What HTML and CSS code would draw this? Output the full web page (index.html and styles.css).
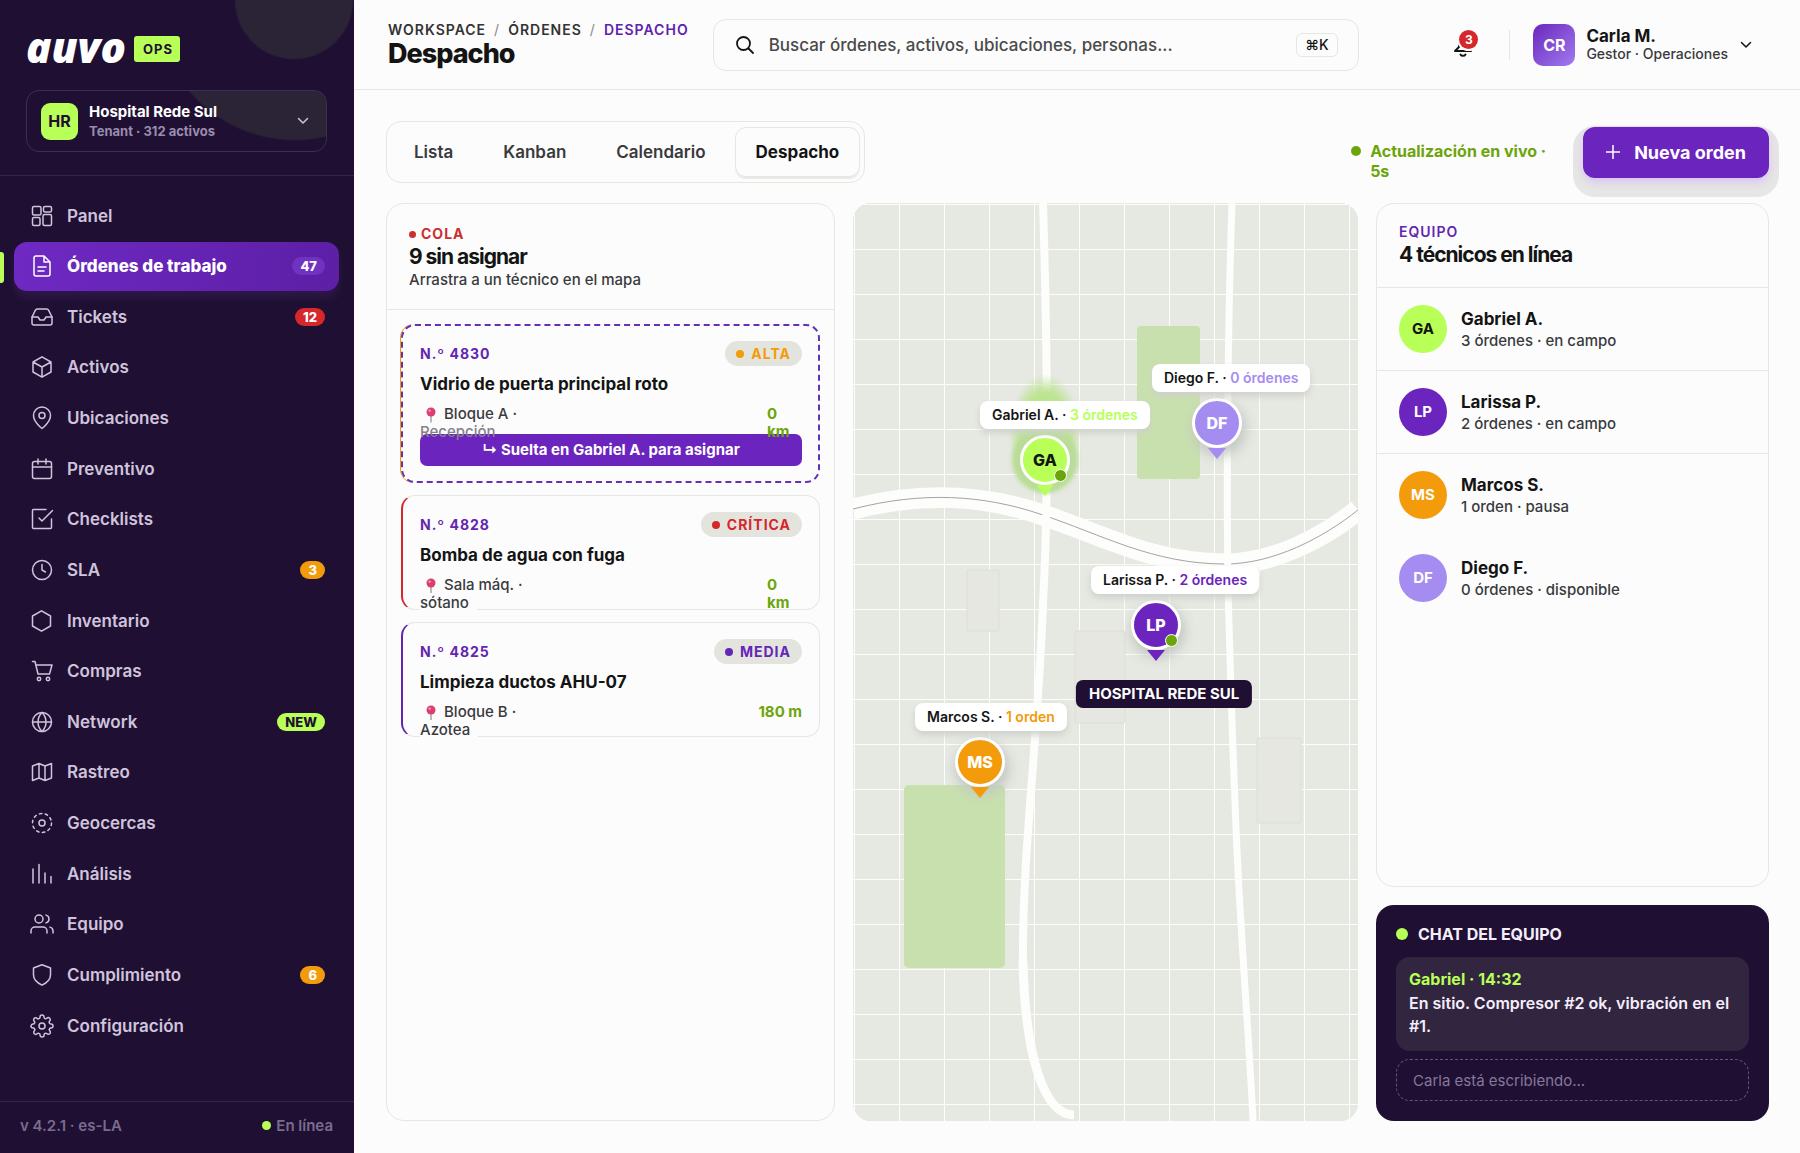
FILE: index.html
```html
<!DOCTYPE html>
<html lang="es">
<head>
<meta charset="utf-8">
<meta name="viewport" content="width=device-width, initial-scale=1">
<title>Despacho · Auvo Ops</title>
<link rel="stylesheet" href="styles.css">
</head>
<body>
<div class="app">
  <aside class="sidebar">
    <div class="sidebar-top">
      <div class="brand"><span class="brand-name">auvo</span><span class="brand-tag">OPS</span></div>
      <button class="tenant" type="button">
        <span class="tenant-logo">HR</span>
        <span class="tenant-text"><strong>Hospital Rede Sul</strong><small>Tenant · 312 activos</small></span>
        <svg class="chevron" viewBox="0 0 14 14"><path d="M2.500 4.500 7 9l4.500-4.500"/></svg>
      </button>
    </div>
    <nav class="nav">
      <a class="nav-item" href="#"><svg class="icon" viewBox="0 0 24 24"><rect x="2.500" y="2.500" width="8.500" height="8.500" rx="1.500"/><rect x="13.500" y="2.500" width="8" height="5.500" rx="1.500"/><rect x="2.500" y="13.500" width="7.500" height="8" rx="1.500"/><rect x="13" y="10.500" width="8.500" height="11" rx="1.500"/></svg><span>Panel</span></a>
      <a class="nav-item is-active" href="#"><svg class="icon" viewBox="0 0 24 24"><path d="M14 2H6a2 2 0 0 0-2 2v16a2 2 0 0 0 2 2h12a2 2 0 0 0 2-2V8zM14 2v6h6M8 13h8M8 17h6"/></svg><span>Órdenes de trabajo</span><b class="count count-soft">47</b></a>
      <a class="nav-item" href="#"><svg class="icon" viewBox="0 0 24 24"><path d="M22 12h-6l-2 3h-4l-2-3H2"/><path d="M5.450 5.110 2 12v6a2 2 0 0 0 2 2h16a2 2 0 0 0 2-2v-6l-3.450-6.890A2 2 0 0 0 16.760 4H7.240a2 2 0 0 0-1.790 1.110z"/></svg><span>Tickets</span><b class="count count-red">12</b></a>
      <a class="nav-item" href="#"><svg class="icon" viewBox="0 0 24 24"><path d="M12 1.800 21 7v10l-9 5.200L3 17V7zM3 7l9 5 9-5M12 12v10"/></svg><span>Activos</span></a>
      <a class="nav-item" href="#"><svg class="icon" viewBox="0 0 24 24"><path d="M12 22.500S20.500 16 20.500 9.500a8.500 8.500 0 0 0-17 0C3.500 16 12 22.500 12 22.500z"/><circle cx="12" cy="9.500" r="3"/></svg><span>Ubicaciones</span></a>
      <a class="nav-item" href="#"><svg class="icon" viewBox="0 0 24 24"><rect x="2.500" y="4.500" width="19" height="17" rx="2"/><path d="M2.500 10h19M8 2v5M16 2v5"/></svg><span>Preventivo</span></a>
      <a class="nav-item" href="#"><svg class="icon" viewBox="0 0 24 24"><path d="M16 2.500H3.500a1 1 0 0 0-1 1v17a1 1 0 0 0 1 1h17a1 1 0 0 0 1-1V12M9 11l3 3L22.500 3.500"/></svg><span>Checklists</span></a>
      <a class="nav-item" href="#"><svg class="icon" viewBox="0 0 24 24"><circle cx="12" cy="12" r="9.500"/><path d="M12 6.500V12l3.500 2"/></svg><span>SLA</span><b class="count count-amber">3</b></a>
      <a class="nav-item" href="#"><svg class="icon" viewBox="0 0 24 24"><path d="M11.500 1.800 20.500 7v10l-9 5.200L2.500 17V7z"/></svg><span>Inventario</span></a>
      <a class="nav-item" href="#"><svg class="icon" viewBox="0 0 24 24"><circle cx="9" cy="20" r="1.700"/><circle cx="18" cy="20" r="1.700"/><path d="M2.500 2.500H5L8 15h11.500L22 6H6"/></svg><span>Compras</span></a>
      <a class="nav-item" href="#"><svg class="icon" viewBox="0 0 24 24"><circle cx="12" cy="12" r="9.500"/><path d="M2.500 12h19M12 2.500c3 3 4 6 4 9.500s-1 6.500-4 9.500c-3-3-4-6-4-9.500s1-6.500 4-9.500z"/></svg><span>Network</span><b class="count count-lime">NEW</b></a>
      <a class="nav-item" href="#"><svg class="icon" viewBox="0 0 24 24"><path d="M2.500 6 9 3.500l6 2.500 6.500-2.500V18L15 20.500 9 18l-6.500 2.500zM9 3.500V18M15 6v14.500"/></svg><span>Rastreo</span></a>
      <a class="nav-item" href="#"><svg class="icon" viewBox="0 0 24 24"><circle cx="12" cy="12" r="9.500" stroke-dasharray="2.500 3.470"/><circle cx="12" cy="12" r="3"/></svg><span>Geocercas</span></a>
      <a class="nav-item" href="#"><svg class="icon" viewBox="0 0 24 24"><path d="M3 7v14M9 2.500V21M15 11v10M21 14.500V21"/></svg><span>Análisis</span></a>
      <a class="nav-item" href="#"><svg class="icon" viewBox="0 0 24 24"><path d="M17 21v-2a4 4 0 0 0-4-4H5a4 4 0 0 0-4 4v2M23 21v-2a4 4 0 0 0-3-3.870M16 3.130a4 4 0 0 1 0 7.750"/><circle cx="9" cy="7" r="4"/></svg><span>Equipo</span></a>
      <a class="nav-item" href="#"><svg class="icon" viewBox="0 0 24 24"><path d="M12 1.800 20.500 5v7c0 5-4 8-8.500 10.200C7.500 20 3.500 17 3.500 12V5z"/></svg><span>Cumplimiento</span><b class="count count-amber">6</b></a>
      <a class="nav-item" href="#"><svg class="icon" viewBox="0 0 24 24"><circle cx="12" cy="12" r="3"/><path d="M19.4 15a1.65 1.65 0 0 0 .33 1.82l.06.06a2 2 0 0 1 0 2.83 2 2 0 0 1-2.83 0l-.06-.06a1.65 1.65 0 0 0-1.82-.33 1.65 1.65 0 0 0-1 1.51V21a2 2 0 0 1-2 2 2 2 0 0 1-2-2v-.09A1.65 1.65 0 0 0 9 19.4a1.65 1.65 0 0 0-1.82.33l-.06.06a2 2 0 0 1-2.83 0 2 2 0 0 1 0-2.83l.06-.06a1.65 1.65 0 0 0 .33-1.82 1.65 1.65 0 0 0-1.51-1H3a2 2 0 0 1-2-2 2 2 0 0 1 2-2h.09A1.65 1.65 0 0 0 4.6 9a1.65 1.65 0 0 0-.33-1.82l-.06-.06a2 2 0 0 1 0-2.83 2 2 0 0 1 2.83 0l.06.06a1.65 1.65 0 0 0 1.82.33H9a1.65 1.65 0 0 0 1-1.51V3a2 2 0 0 1 2-2 2 2 0 0 1 2 2v.09a1.65 1.65 0 0 0 1 1.51 1.65 1.65 0 0 0 1.82-.33l.06-.06a2 2 0 0 1 2.83 0 2 2 0 0 1 0 2.83l-.06.06a1.65 1.65 0 0 0-.33 1.82V9a1.65 1.65 0 0 0 1.51 1H21a2 2 0 0 1 2 2 2 2 0 0 1-2 2h-.09a1.65 1.65 0 0 0-1.51 1z"/></svg><span>Configuración</span></a>
    </nav>
    <footer class="sidebar-foot"><span>v 4.2.1 · es-LA</span><span class="online"><i></i>En línea</span></footer>
  </aside>

  <div class="main">
    <header class="topbar">
      <div class="heading">
        <nav class="crumbs"><a href="#">WORKSPACE</a><i>/</i><a href="#">ÓRDENES</a><i>/</i><a class="current" href="#">DESPACHO</a></nav>
        <h1>Despacho</h1>
      </div>
      <label class="search">
        <svg viewBox="0 0 20 20"><circle cx="8.500" cy="8.500" r="6.500"/><path d="m13.500 13.500 4.500 4.500"/></svg>
        <input type="search" aria-label="Buscar" placeholder="Buscar órdenes, activos, ubicaciones, personas...">
        <kbd>⌘K</kbd>
      </label>
      <div class="account">
        <button class="bell" type="button" aria-label="Notificaciones">
          <svg viewBox="0 0 24 24"><path d="M8 12v2L4 18h16l-3-4v-2M9.500 21.500c1 1.800 4 1.800 5 0"/></svg>
          <b>3</b>
        </button>
        <button class="user" type="button">
          <span class="user-pic">CR</span>
          <span class="user-text"><strong>Carla M.</strong><small>Gestor · Operaciones</small></span>
          <svg class="chevron" viewBox="0 0 14 14"><path d="M2.500 4.500 7 9l4.500-4.500"/></svg>
        </button>
      </div>
    </header>

    <main class="content">
      <div class="toolbar">
        <div class="tabs" role="tablist">
          <button type="button" role="tab">Lista</button>
          <button type="button" role="tab">Kanban</button>
          <button type="button" role="tab">Calendario</button>
          <button type="button" role="tab" class="is-active" aria-selected="true">Despacho</button>
        </div>
        <div class="actions">
          <p class="live"><i></i><span>Actualización en vivo · 5s</span></p>
          <button class="primary" type="button"><svg viewBox="0 0 14 14"><path d="M7 0v14M0 7h14"/></svg>Nueva orden</button>
        </div>
      </div>

      <div class="board">
        <section class="panel queue">
          <header class="panel-head">
            <p class="eyebrow red"><i></i>COLA</p>
            <h2>9 sin asignar</h2>
            <p class="hint">Arrastra a un técnico en el mapa</p>
          </header>
          <div class="orders">
            <article class="order order-high is-dragging">
              <div class="order-top"><span class="num">N.º 4830</span><span class="pill amber"><i></i>ALTA</span></div>
              <h3>Vidrio de puerta principal roto</h3>
              <div class="meta"><p class="place"><svg viewBox="0 0 10 16"><path class="needle" d="M5 8v7"/><circle cx="5" cy="5" r="4.500"/><circle class="shine" cx="3.700" cy="3.600" r="1.200"/></svg>Bloque A ·<br><span class="faded">Recepción</span></p><p class="dist">0 km</p></div>
              <div class="drop">↳ Suelta en Gabriel A. para asignar</div>
            </article>
            <article class="order order-critical">
              <div class="order-top"><span class="num">N.º 4828</span><span class="pill red"><i></i>CRÍTICA</span></div>
              <h3>Bomba de agua con fuga</h3>
              <div class="meta"><p class="place"><svg viewBox="0 0 10 16"><path class="needle" d="M5 8v7"/><circle cx="5" cy="5" r="4.500"/><circle class="shine" cx="3.700" cy="3.600" r="1.200"/></svg>Sala máq. ·<br><span>sótano</span></p><p class="dist">0 km</p></div>
            </article>
            <article class="order order-medium">
              <div class="order-top"><span class="num">N.º 4825</span><span class="pill purple"><i></i>MEDIA</span></div>
              <h3>Limpieza ductos AHU-07</h3>
              <div class="meta"><p class="place"><svg viewBox="0 0 10 16"><path class="needle" d="M5 8v7"/><circle cx="5" cy="5" r="4.500"/><circle class="shine" cx="3.700" cy="3.600" r="1.200"/></svg>Bloque B ·<br><span>Azotea</span></p><p class="dist wide">180 m</p></div>
            </article>
          </div>
        </section>

        <section class="map" aria-label="Mapa">
          <svg class="map-art" viewBox="0 0 505 918" preserveAspectRatio="none">
            <defs><pattern id="grid" x="1" y="1" width="45" height="45" patternUnits="userSpaceOnUse"><path d="M0 .5h45M.5 0v45" stroke="#fdfefc" fill="none"/></pattern></defs>
            <rect width="505" height="918" fill="#e6e8e2"/>
            <rect width="505" height="918" fill="url(#grid)"/>
            <g fill="#e5e7e0" stroke="#dcded7"><rect x="114" y="367" width="32" height="61" rx="2"/><rect x="222" y="428" width="50" height="92" rx="2"/><rect x="404" y="535" width="44" height="85" rx="2"/></g>
            <g fill="#c8e0ad"><rect x="284" y="123" width="63" height="153" rx="4"/><rect x="51" y="582" width="101" height="183" rx="5"/></g>
            <g fill="none" stroke="#fdfdfc">
              <path stroke-width="21" d="M0 306C70 288 130 292 187 311 250 332 300 361 372 361 420 361 470 335 505 307"/>
              <path stroke="#a3a4a0" d="M0 306C70 288 130 292 187 311 250 332 300 361 372 361 420 361 470 335 505 307"/>
              <path stroke-width="8" d="M190 0C196 200 194 330 190 400 185 540 169 650 170 760"/>
              <path stroke-width="9" d="M170 758C172 850 190 912 221 912"/>
              <path stroke-width="7" d="M379 0C374 150 373 330 376 420 380 560 384 660 388 720 392 790 398 870 400 918"/>
            </g>
          </svg>
          <div class="tech lime glow" style="left:38.020%;top:28%"><span class="pin">GA<i></i></span><span class="tip"><b>Gabriel A.</b> · <em>3 órdenes</em></span></div>
          <div class="tech lilac" style="left:72.080%;top:23.970%"><span class="pin">DF</span><span class="tip"><b>Diego F.</b> · <em>0 órdenes</em></span></div>
          <div class="tech purple" style="left:60%;top:45.970%"><span class="pin">LP<i></i></span><span class="tip"><b>Larissa P.</b> · <em>2 órdenes</em></span></div>
          <div class="tech amber" style="left:25.150%;top:60.890%"><span class="pin">MS</span><span class="tip"><b>Marcos S.</b> · <em>1 orden</em></span></div>
          <div class="site" style="left:61.600%;top:53.500%">HOSPITAL REDE SUL</div>
        </section>

        <div class="side">
          <section class="panel team">
            <header class="panel-head">
              <p class="eyebrow purple">EQUIPO</p>
              <h2>4 técnicos en línea</h2>
            </header>
            <ul>
              <li><span class="avatar lime">GA</span><div><strong>Gabriel A.</strong><small>3 órdenes · en campo</small></div></li>
              <li><span class="avatar purple">LP</span><div><strong>Larissa P.</strong><small>2 órdenes · en campo</small></div></li>
              <li><span class="avatar amber">MS</span><div><strong>Marcos S.</strong><small>1 orden · pausa</small></div></li>
              <li><span class="avatar lilac">DF</span><div><strong>Diego F.</strong><small>0 órdenes · disponible</small></div></li>
            </ul>
          </section>
          <section class="chat">
            <h2><i></i>CHAT DEL EQUIPO</h2>
            <div class="message"><strong>Gabriel · 14:32</strong><p>En sitio. Compresor #2 ok, vibración en el #1.</p></div>
            <input type="text" aria-label="Mensaje" placeholder="Carla está escribiendo...">
          </section>
        </div>
      </div>
    </main>
  </div>
</div>
</body>
</html>
```

FILE: styles.css
```css
:root {
  --ink: #141414;
  --text: #3a3a3c;
  --line: #e6e6e3;
  --paper: #fcfcfc;
  --night: #1f1033;
  --purple: #6b24bd;
  --lime: #b8ff57;
  --amber: #f39b0b;
  --red: #d6272b;
  --lilac: #a58cf0;
  --leaf: #6ba50a;
}

* { box-sizing: border-box; }

body, h1, h2, h3, p, ul { margin: 0; padding: 0; }

body {
  background: var(--paper);
  color: var(--ink);
  font-family: Inter, "Liberation Sans", sans-serif;
  font-size: 16px;
}

button, input, kbd { font: inherit; color: inherit; }
button { border: 0; background: none; padding: 0; text-align: left; cursor: pointer; }
a { color: inherit; text-decoration: none; }
i, em { font-style: normal; }
svg { fill: none; stroke: currentColor; stroke-linecap: round; stroke-linejoin: round; flex: none; }

.app {
  display: grid;
  grid-template-columns: 354px minmax(0, 1fr);
  min-height: 100vh;
}

/* Sidebar */
.sidebar {
  display: flex;
  flex-direction: column;
  background: radial-gradient(circle at 294px 0, #2b2336 58px, transparent 60px), var(--night);
  color: #cfc4dc;
}

.sidebar-top {
  display: flex;
  flex-direction: column;
  gap: 20px;
  padding: 28px 27px 23px 26px;
  border-bottom: 1px solid #33254a;
}

.brand {
  display: flex;
  align-items: center;
  gap: 8px;
  height: 42px;
}

.brand-name {
  color: #fff;
  font: italic 800 42px/42px "Open Sans", "Noto Sans", sans-serif;
  margin-top: -4px;
}

.brand-tag {
  padding: 0 7px 0 9px;
  border-radius: 3px;
  background: var(--lime);
  color: var(--night);
  font-size: 13px;
  font-weight: 700;
  line-height: 26px;
  letter-spacing: 1px;
}

.tenant {
  display: flex;
  align-items: center;
  gap: 11px;
  height: 62px;
  padding: 0 16px 0 14px;
  border: 1px solid #3b2f4e;
  border-radius: 13px;
  background: radial-gradient(circle at 268px -90px, #2b2336 138px, transparent 140px);
}

.tenant-logo {
  width: 37px;
  border-radius: 9px;
  background: var(--lime);
  color: var(--night);
  font-size: 16px;
  font-weight: 700;
  line-height: 37px;
  text-align: center;
}

.tenant-text { flex: 1; display: grid; }
.tenant-text strong { color: #fff; font-size: 15px; line-height: 20px; }
.tenant-text small { color: #9a8caf; font-size: 13px; line-height: 18px; font-weight: 700; }
.chevron { width: 14px; height: 14px; stroke-width: 1.500; }

.nav {
  flex: 1;
  display: flex;
  flex-direction: column;
  justify-content: space-between;
  padding: 15px 15px 51px 14px;
}

.nav-item {
  position: relative;
  display: flex;
  align-items: center;
  gap: 13px;
  height: 49px;
  padding: 0 14px 0 16px;
  border-radius: 13px;
  font-size: 17px;
  font-weight: 600;
}

.nav-item span { flex: 1; }
.icon { width: 24px; height: 24px; stroke-width: 1.500; }

.nav-item.is-active {
  background: linear-gradient(100deg, #6f29c4, #5c1fa5);
  box-shadow: 0 7px 6px #2c1747;
  color: #fff;
  font-weight: 800;
}

.nav-item.is-active::before {
  content: "";
  position: absolute;
  left: -14px;
  top: 10px;
  width: 4px;
  height: 31px;
  border-radius: 0 3px 3px 0;
  background: var(--lime);
}

.count {
  padding: 0 8px;
  border-radius: 9px;
  color: #fff;
  font-size: 13px;
  font-weight: 800;
  line-height: 18px;
}
.count-soft { background: #7033bf; }
.count-red { background: var(--red); }
.count-amber { background: var(--amber); }
.count-lime { background: var(--lime); color: var(--night); }

.sidebar-foot {
  display: flex;
  justify-content: space-between;
  align-items: center;
  height: 52px;
  padding: 0 21px 4px 20px;
  border-top: 1px solid #33254a;
  color: #7a6c8f;
  font-size: 15px;
  font-weight: 600;
}
.online { display: flex; align-items: center; gap: 5px; }
.online i { width: 9px; height: 9px; border-radius: 50%; background: var(--lime); }

/* Top bar */
.main { display: flex; flex-direction: column; min-width: 0; }

.topbar {
  display: flex;
  align-items: center;
  gap: 24px;
  height: 90px;
  padding: 0 47px 0 34px;
  border-bottom: 1px solid var(--line);
}

.crumbs {
  display: flex;
  gap: 8px;
  font-size: 14px;
  font-weight: 600;
  line-height: 18px;
  letter-spacing: 1px;
  color: #333;
}
.crumbs i { color: #888; font-weight: 400; }
.crumbs .current { color: #5f22ae; }

h1 { font-size: 27px; font-weight: 800; line-height: 30px; letter-spacing: -1px; }

.search {
  display: flex;
  align-items: center;
  gap: 14px;
  flex: 0 1 646px;
  height: 52px;
  padding: 0 20px 0 21px;
  border: 1px solid var(--line);
  border-radius: 13px;
}
.search svg { width: 20px; height: 20px; stroke-width: 1.800; }
.search input { flex: 1; min-width: 0; padding: 0; border: 0; background: none; font-size: 17px; font-weight: 500; outline: 0; }
.search input::placeholder { color: #4a4a4a; opacity: 1; }
.search kbd {
  padding: 0 8px;
  border: 1px solid var(--line);
  border-radius: 6px;
  font-size: 14px;
  line-height: 22px;
  font-weight: 500;
}

.account { display: flex; align-items: center; gap: 23px; margin-left: auto; }

.bell {
  position: relative;
  display: grid;
  place-items: center;
  width: 69px;
  height: 30px;
  padding-right: 24px;
  border-right: 1px solid var(--line);
}
.bell svg { width: 24px; height: 24px; stroke-width: 2; }
.bell b {
  position: absolute;
  left: 18px;
  top: 0;
  width: 19px;
  height: 19px;
  border-radius: 50%;
  background: var(--red);
  box-shadow: 0 0 0 2px var(--paper);
  color: #fff;
  font-size: 12px;
  line-height: 19px;
  text-align: center;
}

.user { display: flex; align-items: center; gap: 11px; }
.user-pic {
  width: 42px;
  border-radius: 10px;
  background: linear-gradient(135deg, #6b27bd, #a07bee);
  color: #fff;
  font-weight: 700;
  line-height: 42px;
  text-align: center;
}
.user-text { display: grid; }
.user-text strong { font-size: 17px; line-height: 18px; }
.user-text small { color: var(--text); font-size: 14px; font-weight: 500; line-height: 18px; }

/* Toolbar */
.content {
  flex: 1;
  display: flex;
  flex-direction: column;
  gap: 20px;
  padding: 31px 31px 32px 32px;
}

.toolbar { display: flex; align-items: center; justify-content: space-between; }

.tabs {
  display: flex;
  gap: 8px;
  height: 62px;
  padding: 5px 4px 5px 6px;
  border: 1px solid var(--line);
  border-radius: 15px;
}
.tabs button {
  padding: 0 20px;
  border: 1px solid transparent;
  border-radius: 11px;
  color: var(--text);
  font-size: 17px;
  font-weight: 600;
}
.tabs .is-active {
  border-color: var(--line);
  box-shadow: 0 2px 1px #e9e9e6;
  color: var(--ink);
  font-weight: 700;
}

.actions { display: flex; align-items: center; gap: 33px; }
.live {
  display: flex;
  gap: 9px;
  width: 199px;
  padding-top: 18px;
  color: var(--leaf);
  font-size: 16px;
  font-weight: 700;
  line-height: 20px;
}
.live i { flex: none; width: 10px; height: 10px; margin-top: 5px; border-radius: 50%; background: var(--leaf); }

.primary {
  display: flex;
  align-items: center;
  gap: 14px;
  height: 51px;
  padding: 0 23px;
  border-radius: 12px;
  background: var(--purple);
  box-shadow: 0 4px 8px #d9c2f5, 0 9px 0 10px #e6e6e4;
  color: #fff;
  font-size: 18px;
  font-weight: 700;
}
.primary svg { width: 14px; height: 14px; stroke-width: 1.500; }

/* Board */
.board {
  flex: 1;
  display: grid;
  grid-template-columns: minmax(0, 449fr) minmax(0, 505fr) minmax(0, 393fr);
  gap: 18px;
  position: relative;
}

.panel {
  border: 1px solid var(--line);
  border-radius: 18px;
  background: var(--paper);
}
.panel-head { padding: 20px 22px; border-bottom: 1px solid var(--line); }
.team .panel-head { height: 84px; padding-top: 18px; }
.eyebrow { display: flex; align-items: center; gap: 5px; font-size: 14px; font-weight: 600; line-height: 20px; letter-spacing: 1px; }
.eyebrow i { width: 7px; height: 7px; border-radius: 50%; background: currentColor; }
.eyebrow.red { color: #c93030; font-weight: 700; }
.eyebrow.purple { color: #6426b0; }
.panel-head h2 { font-size: 21px; font-weight: 700; line-height: 26px; letter-spacing: -1px; }
.hint { color: var(--text); font-size: 15px; font-weight: 500; line-height: 19px; }

.orders { display: grid; gap: 12px; padding: 14px; }

.order {
  position: relative;
  height: 115px;
  padding: 16px 17px 0;
  border: 1px solid var(--line);
  border-left-width: 2px;
  border-radius: 14px;
}
.order-critical { border-left-color: var(--red); }
.order-medium { border-left-color: #6123b3; }
.order.is-dragging {
  height: 159px;
  padding: 15px 16px 0 17px;
  border: 2px dashed #6530b5;
  box-shadow: -1px 0 0 var(--amber);
}
.order-top { display: flex; justify-content: space-between; align-items: center; height: 25px; }
.num { color: #6426b0; font-size: 14px; font-weight: 700; letter-spacing: 1px; }
.pill {
  display: flex;
  align-items: center;
  gap: 7px;
  height: 25px;
  padding: 0 11px;
  border-radius: 13px;
  background: #e3e4de;
  font-size: 14px;
  font-weight: 700;
  letter-spacing: 1px;
}
.pill i { width: 8px; height: 8px; border-radius: 50%; background: currentColor; }
.pill.amber { color: var(--amber); }
.pill.red { color: var(--red); }
.pill.purple { color: #6426b8; }
.order h3 { margin: 6px 0 9px; font-size: 17px; font-weight: 700; line-height: 24px; }

.meta { position: relative; z-index: 1; display: flex; justify-content: space-between; height: 18px; }
.place, .dist { font-size: 15px; line-height: 18px; }
.place { color: var(--text); font-weight: 500; }
.place svg { width: 10px; height: 16px; margin: 0 8px 0 6px; vertical-align: -4px; fill: #dc3f6d; stroke: none; }
.place .needle { stroke: #777; }
.place .shine { fill: #f6a3b9; }
.place span { padding-right: 8px; background: var(--paper); }
.place .faded { background: none; color: #85808a; }
.dist { width: 35px; color: var(--leaf); font-weight: 700; }
.dist.wide { width: auto; }

.drop {
  margin-top: 11px;
  border-radius: 7px;
  background: var(--purple);
  color: #fff;
  font-size: 15px;
  font-weight: 700;
  line-height: 32px;
  text-align: center;
}

/* Map */
.map { position: relative; overflow: hidden; border-radius: 18px; background: #e6e8e2; }
.map-art { position: absolute; inset: 0; width: 100%; height: 100%; stroke: none; stroke-linecap: butt; }

.tech { position: absolute; width: 0; height: 0; }
.pin {
  position: absolute;
  left: -25px;
  top: -25px;
  width: 50px;
  height: 50px;
  border: 3px solid #fff;
  border-radius: 50%;
  background: var(--tone);
  box-shadow: 2px 6px 12px 2px #c4c8c2;
  color: var(--on, #fff);
  font-size: 16px;
  font-weight: 800;
  line-height: 44px;
  text-align: center;
}
.glow .pin { box-shadow: 0 0 4px 8px #b9dd98; }
.pin::after {
  content: "";
  position: absolute;
  left: 13px;
  top: 47px;
  border: 9px solid transparent;
  border-top: 11px solid var(--tone);
  border-bottom: 0;
}
.pin i {
  position: absolute;
  right: 0;
  bottom: 0;
  width: 13px;
  height: 13px;
  border: 1px solid #fff;
  border-radius: 50%;
  background: var(--leaf);
}
.tip {
  position: absolute;
  left: -65px;
  bottom: 31px;
  padding: 0 12px;
  border-radius: 8px;
  background: #fff;
  box-shadow: 0 4px 6px #cfd1cc;
  font-size: 14px;
  font-weight: 600;
  line-height: 28px;
  white-space: nowrap;
}
.tip b { font-weight: 600; }
.tip em { color: var(--tone); }
.tech.glow::before {
  content: "";
  position: absolute;
  left: -36px;
  top: -86px;
  width: 72px;
  height: 122px;
  border-radius: 50%;
  background: radial-gradient(closest-side, #a8ee59, #bfe496 70%, transparent);
}
.lime { --tone: var(--lime); --on: var(--ink); }
.lilac { --tone: var(--lilac); }
.tech.purple, .avatar.purple { --tone: var(--purple); }
.amber { --tone: var(--amber); }

.site {
  position: absolute;
  transform: translateX(-50%);
  padding: 0 13px;
  border-radius: 7px;
  background: var(--night);
  color: #fff;
  font-size: 15px;
  font-weight: 700;
  line-height: 28px;
  white-space: nowrap;
  margin-top: -14px;
}

/* Team and chat */
.side { display: flex; flex-direction: column; gap: 18px; }
.team { flex: 1; }
.team ul { list-style: none; }
.team li {
  display: flex;
  align-items: center;
  gap: 14px;
  height: 83px;
  padding: 0 22px;
  border-bottom: 1px solid var(--line);
}
.team li:nth-child(n + 3) { border-color: transparent; }
.avatar {
  width: 48px;
  border-radius: 50%;
  background: var(--tone);
  color: var(--on, #fff);
  font-size: 15px;
  font-weight: 700;
  line-height: 48px;
  text-align: center;
}
.team li div { display: grid; }
.team li strong { font-size: 17px; font-weight: 700; line-height: 22px; }
.team li small { color: var(--text); font-size: 15px; font-weight: 500; line-height: 21px; }

.chat {
  display: flex;
  flex-direction: column;
  height: 216px;
  padding: 18px 20px;
  border-radius: 18px;
  background: var(--night);
  color: #f4eefb;
}
.chat h2 { display: flex; align-items: center; gap: 10px; font-size: 16px; font-weight: 700; line-height: 22px; }
.chat h2 i { width: 12px; height: 12px; border-radius: 50%; background: var(--lime); }
.message { margin: 12px 0 8px; padding: 10px 13px 13px; border-radius: 14px; background: #31253f; }
.message strong { display: block; color: var(--lime); font-size: 16px; line-height: 25px; }
.message p { font-size: 16px; font-weight: 600; line-height: 23px; }
.chat input {
  height: 42px;
  padding: 0 16px;
  border: 1px dashed #62557a;
  border-radius: 14px;
  background: none;
  font-size: 15px;
  outline: 0;
}
.chat input::placeholder { color: #85779a; opacity: 1; }
```
